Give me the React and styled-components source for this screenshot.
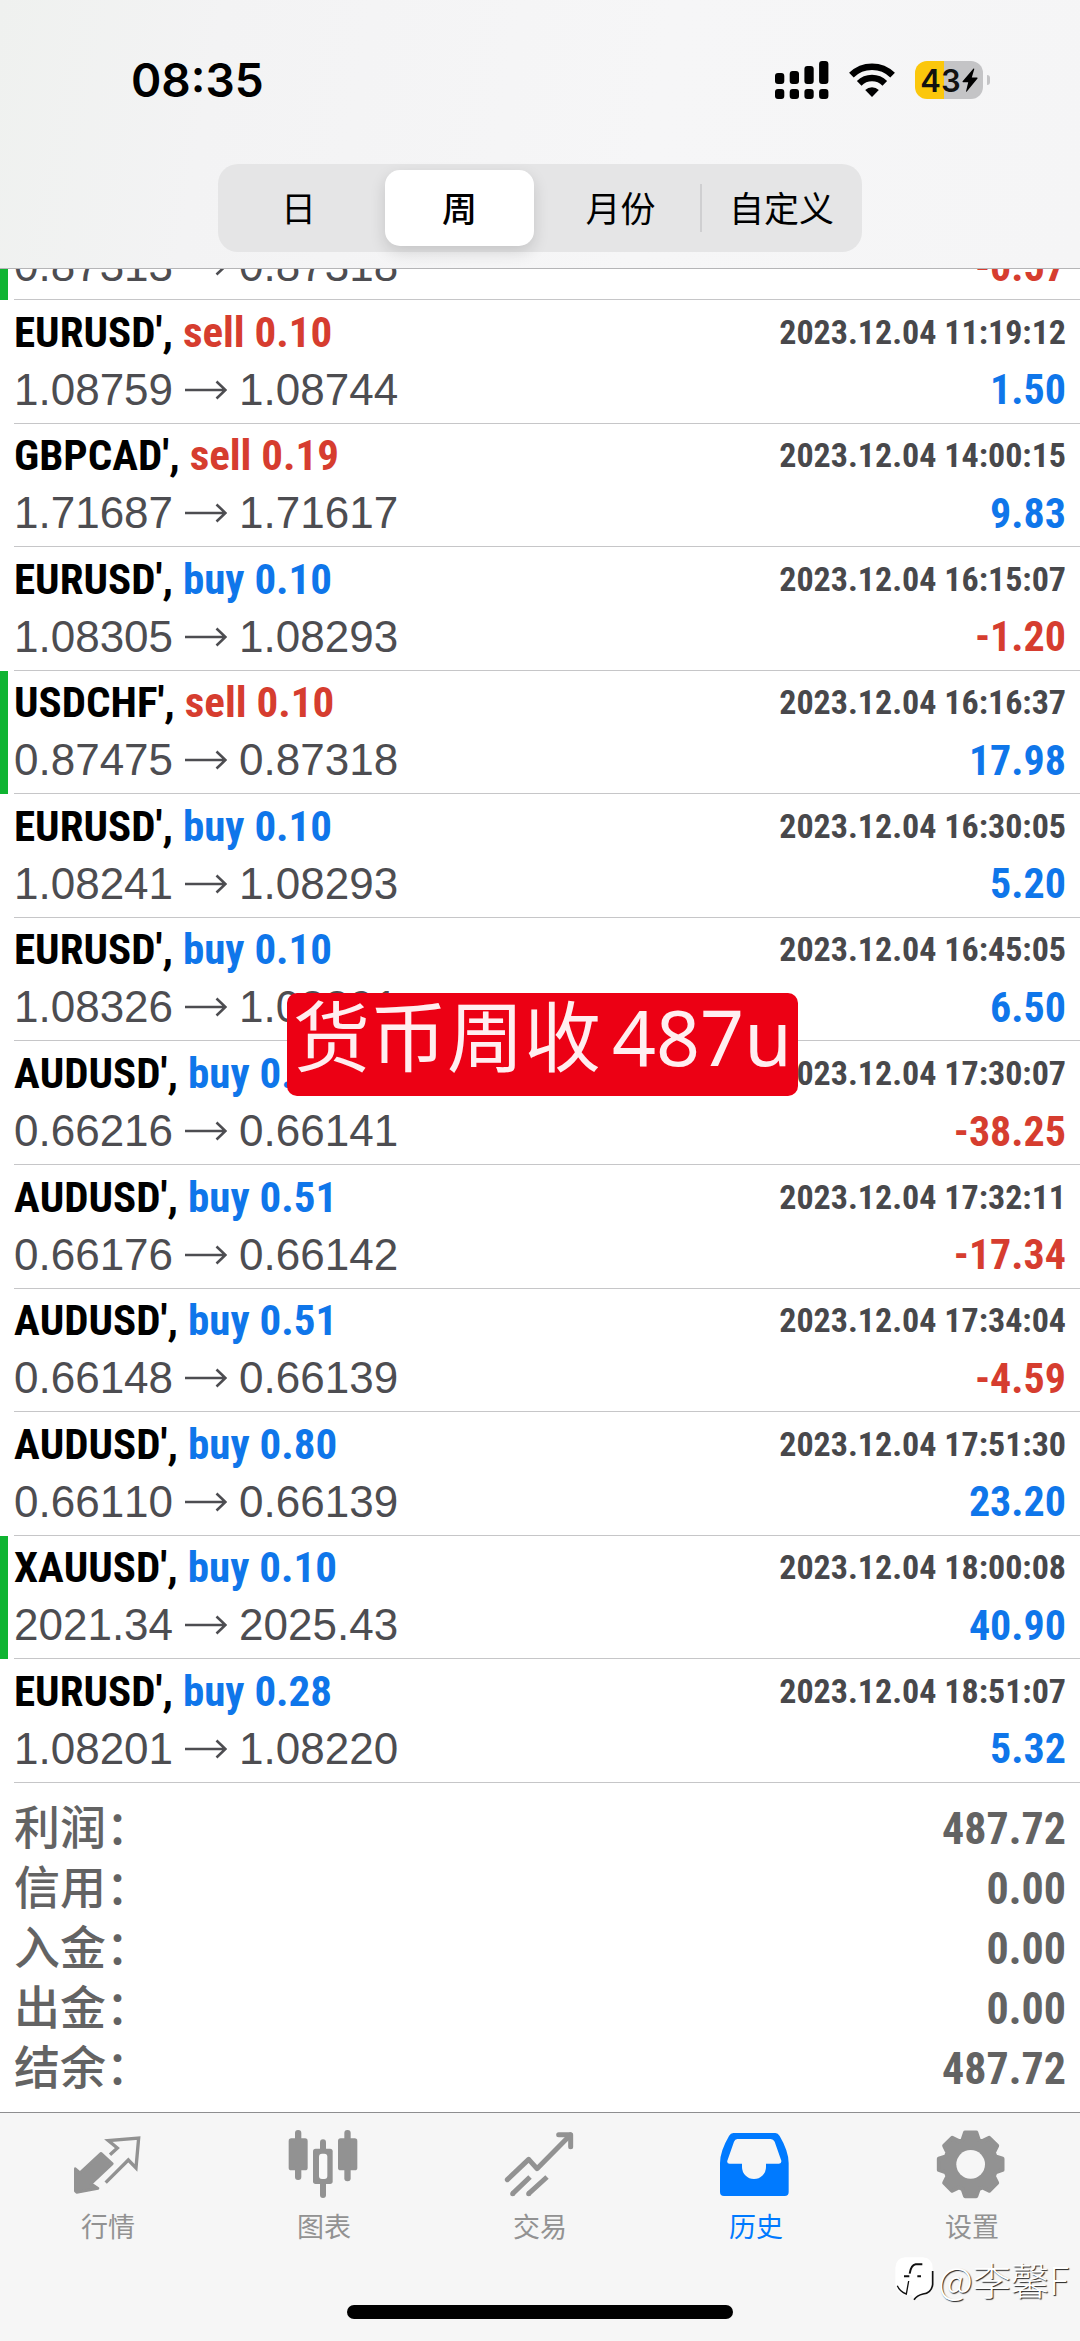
import styled, { createGlobalStyle } from 'styled-components';

const GlobalStyle = createGlobalStyle`
  * {
    box-sizing: border-box;
  }

  body {
    margin: 0;
    background-color: #fff;
    font-family: 'Liberation Sans', 'Noto Sans CJK SC', sans-serif;
    font-kerning: none;
  }

  button {
    border: 0;
    padding: 0;
    background: none;
    font: inherit;
    color: inherit;
  }
`;

const BLUE = '#0f76ea';
const RED = '#d63d2f';
const CONDENSED = "'Roboto Condensed', Roboto, sans-serif";

const Screen = styled.div`
  position: relative;
  display: flex;
  flex-direction: column;
  min-height: 100vh;
  overflow: hidden;
`;

const Header = styled.header`
  border-bottom: 1px solid #b5b5b7;
  background: linear-gradient(100deg, #eff1ef 0%, #f3f3f4 20%, #f6f6f7 60%, #f5f5f6 100%);
`;

const StatusBar = styled.div`
  display: flex;
  align-items: center;
  justify-content: space-between;
  height: 160px;
  padding: 0 90px 0 131px;
`;

const Time = styled.span`
  font-family: Inter, sans-serif;
  font-size: 46px;
  font-weight: 600;
  color: #000;
`;

const StatusIcons = styled.div`
  display: flex;
  align-items: center;
  gap: 20px;
`;

const BatteryBox = styled.div`
  display: flex;
  align-items: center;
  gap: 4px;
`;

const Battery = styled.div`
  display: flex;
  align-items: center;
  justify-content: center;
  gap: 1px;
  width: 68px;
  height: 38px;
  border-radius: 12px;
  background: linear-gradient(90deg, #fbc70c 43%, #c4c4c6 43%);
  font-family: Inter, sans-serif;
  font-size: 31px;
  font-weight: 600;
  color: #111;
`;

const BatteryTip = styled.span`
  width: 3px;
  height: 10px;
  border-radius: 0 4px 4px 0;
  background-color: #c4c4c6;
`;

const Periods = styled.div`
  display: flex;
  width: 60%;
  max-width: 644px;
  height: 88px;
  margin: 4px auto 16px;
  border-radius: 20px;
  background-color: #e5e5e6;
`;

const Period = styled.button`
  flex: 1;
  margin: 6px;
  border-radius: 15px;
  font-family: 'Noto Sans CJK SC', sans-serif;
  font-size: 35px;
  line-height: 74px;
  padding-bottom: 2px;
  white-space: nowrap;
  color: #000;
  font-weight: ${(props) => (props.$active ? 500 : 400)};
  background-color: ${(props) => (props.$active ? '#fff' : 'transparent')};
  box-shadow: ${(props) => (props.$active ? '0 6px 16px rgba(0, 0, 0, 0.14)' : 'none')};
`;

const Divider = styled.span`
  width: 2px;
  height: 48px;
  margin: 20px -1px;
  background-color: #cfcfd1;
`;

const Deals = styled.ul`
  display: flex;
  flex: 1;
  flex-direction: column;
  margin: 0;
  padding: 0;
  list-style: none;
`;

/* a deal scrolled under the header keeps only its bottom edge */
const Deal = styled.li`
  display: flex;
  flex: ${(props) => (props.$scrolled ? '0 0 31px' : '1')};
  overflow: hidden;
  border-left: 8px solid ${(props) => (props.$marked ? '#0fb432' : 'transparent')};
  padding-left: 6px;
`;

const DealBody = styled.div`
  display: flex;
  flex: 1;
  flex-direction: column;
  justify-content: flex-end;
  padding: 0 14px 4px 0;
  border-bottom: 1px solid #c6c6c8;
`;

const Line = styled.div`
  display: flex;
  flex-shrink: 0;
  align-items: center;
  justify-content: space-between;
  height: 58px;
  white-space: nowrap;
`;

const Symbol = styled.span`
  font-family: ${CONDENSED};
  font-size: 43px;
  font-weight: 700;
  color: #000;
`;

const Action = styled.span`
  color: ${(props) => (props.$side === 'buy' ? BLUE : RED)};
`;

const DealTime = styled.time`
  font-family: ${CONDENSED};
  font-size: 34px;
  font-weight: 700;
  color: #48484b;
`;

const Prices = styled.span`
  display: flex;
  align-items: center;
  gap: 12px;
  font-size: 44px;
  color: #4d4d51;
`;

const Profit = styled.span`
  font-family: ${CONDENSED};
  font-size: 42px;
  font-weight: 700;
  color: ${(props) => (props.$loss ? RED : BLUE)};
`;

const Summary = styled.dl`
  margin: 0;
  padding: 16px 14px 13px;
`;

const SummaryRow = styled.div`
  display: flex;
  justify-content: space-between;
  height: 60px;
  color: #636363;
`;

const SummaryLabel = styled.dt`
  font-family: 'Noto Sans CJK SC', sans-serif;
  font-size: 46px;
  font-weight: 500;
  line-height: 50px;
`;

const SummaryValue = styled.dd`
  margin: 0;
  font-family: ${CONDENSED};
  font-size: 44px;
  font-weight: 700;
  line-height: 60px;
`;

const TabBar = styled.nav`
  border-top: 1px solid #8e8e90;
  background-color: #f6f6f6;
`;

const Tabs = styled.div`
  display: flex;
  height: 192px;
  padding-top: 15px;
`;

const Tab = styled.button`
  display: flex;
  flex: 1;
  flex-direction: column;
  align-items: center;
  gap: 6px;
  font-family: 'Noto Sans CJK SC', sans-serif;
  font-size: 27px;
  line-height: 40px;
  color: ${(props) => (props.$active ? '#007aff' : '#929292')};
`;

const HomeIndicator = styled.div`
  width: 386px;
  height: 14px;
  margin: 0 auto 22px;
  border-radius: 7px;
  background-color: #000;
`;

const Banner = styled.div`
  position: absolute;
  top: 993px;
  left: 287px;
  display: flex;
  gap: 11px;
  height: 103px;
  padding: 0 6px;
  border-radius: 10px;
  background-color: #ec0014;
  font-family: 'Noto Sans', 'Noto Sans CJK SC', sans-serif;
  font-size: 77px;
  line-height: 88px;
  white-space: nowrap;
  color: #ffeef0;
`;

const Watermark = styled.div`
  position: absolute;
  right: 11px;
  bottom: 40px;
  display: flex;
  align-items: center;
  gap: 4px;
  font-family: 'Noto Sans CJK SC', sans-serif;
  font-size: 38px;
  font-weight: 300;
  line-height: 40px;
  color: #fff;
  text-shadow: 1px 1px 1px #222;
`;

function SignalIcon() {
  const tops = [12, 10, 5, 0];

  return (
    <svg width="54" height="38" viewBox="0 0 54 38">
      {tops.map((top, i) => (
        <g key={top}>
          <rect x={i * 14.7} y={top} width="9.3" height={23 - top} rx="3" />
          <rect x={i * 14.7} y="28" width="9.3" height="10" rx="3" />
        </g>
      ))}
    </svg>
  );
}

function WifiIcon() {
  return (
    <svg width="46" height="34" viewBox="0 0 46 34" fill="none" stroke="#000" strokeWidth="6.6">
      <path d="M2.4 12.2a29.5 29.5 0 0 1 41.2 0" />
      <path d="M10.2 20.3a18.2 18.2 0 0 1 25.6 0" />
      <path d="M16.2 27a9.8 9.8 0 0 1 13.6 0L23 34z" fill="#000" stroke="none" />
    </svg>
  );
}

function BoltIcon() {
  return (
    <svg width="16" height="24" viewBox="0 0 16 24">
      <path d="M11.5 0.5 0.6 13.2q-0.5 1 0.6 1.1h5L4 23.4q0.2 0.6 0.8 0.2L15.5 10.4q0.4-0.9-0.6-1H9.8L12.3 1q0-0.7-0.8-0.5z" />
    </svg>
  );
}

function ArrowIcon() {
  return (
    <svg width="42" height="20" viewBox="0 0 42 20" fill="none" stroke="currentColor" strokeWidth="2.6">
      <path d="M0 10h40M31.5 1.5 40.5 10l-9 8.5" />
    </svg>
  );
}

function QuotesIcon() {
  return (
    <svg width="72" height="72" viewBox="0 0 216 216">
      <path
        d="M114 80 136 60 109 38 200 30 192 120 169 96 101 164"
        fill="none"
        stroke="currentColor"
        strokeWidth="10"
      />
      <path
        d="M87 76 121 107 57 167 78 181 14 193 10 189V122L24 134z"
        fill="currentColor"
        stroke="currentColor"
        strokeWidth="8"
        strokeLinejoin="round"
      />
    </svg>
  );
}

function ChartIcon() {
  return (
    <svg width="72" height="72" viewBox="0 0 216 216" fill="currentColor">
      <rect x="2" y="31" width="57" height="96" rx="8" />
      <rect x="21" y="6" width="19" height="150" rx="9" />
      <rect x="150" y="31" width="58" height="96" rx="8" />
      <rect x="169" y="6" width="19" height="154" rx="9" />
      <rect x="96" y="34" width="18" height="176" rx="9" />
      <rect x="75" y="62" width="59" height="106" rx="8" />
      <rect x="93" y="77" width="25" height="76" rx="9" fill="#f9f9f9" />
    </svg>
  );
}

function TradeIcon() {
  return (
    <svg
      width="72"
      height="72"
      viewBox="0 0 216 216"
      fill="none"
      stroke="currentColor"
      strokeWidth="15"
      strokeLinejoin="round"
    >
      <path d="M10 155 74 94 99 122 199 21" strokeLinecap="round" />
      <path d="M164 20h36v36" strokeLinecap="round" />
      <path d="M26 197 78 147M74 197 129 147" />
      <circle cx="26" cy="197" r="7.5" fill="currentColor" stroke="none" />
      <circle cx="74" cy="197" r="7.5" fill="currentColor" stroke="none" />
    </svg>
  );
}

function HistoryIcon() {
  return (
    <svg width="72" height="72" viewBox="0 0 216 216" fill="currentColor" fillRule="evenodd">
      <path
        d="M40 15H166Q174 15 179 24Q206 70 206 105V192Q206 204 194 204H12Q0 204 0 192V105Q0 70 27 24Q32 15 40 15Z
          M52 33H152Q160 33 164 41L184 98Q185 107 177 107H138V117a36 36 0 0 1-72 0V107H29Q20 107 22 98L42 41Q45 33 52 33Z"
      />
    </svg>
  );
}

function SettingsIcon() {
  const corners = [[78, -18], [97, -10], [97, 10], [78, 18]];
  const points = [];

  for (let tooth = 0; tooth < 8; tooth += 1) {
    corners.forEach(([radius, offset]) => {
      const angle = ((tooth * 45 + offset) * Math.PI) / 180;
      points.push(`${104 + radius * Math.sin(angle)},${109 - radius * Math.cos(angle)}`);
    });
  }

  return (
    <svg width="72" height="72" viewBox="0 0 216 216">
      <polygon
        points={points.join(' ')}
        fill="currentColor"
        stroke="currentColor"
        strokeWidth="12"
        strokeLinejoin="round"
      />
      <circle cx="104" cy="109" r="43" fill="#f6f6f6" />
    </svg>
  );
}

function WatermarkLogo() {
  return (
    <svg width="39" height="44" viewBox="0 0 117 132" fill="none" stroke="#111" strokeWidth="4">
      <path
        d="M30 1H84Q113 3 113 34V82Q110 108 84 112L56 130 50 114H34Q1 110 1 82V32Q3 3 30 1Z"
        fill="#fff"
        stroke="none"
      />
      <path d="M44 50Q48 24 62 22H82M27 58H43M67 58H78" strokeWidth="6" />
      <path d="M41 72 34 111Q14 104 7 86" />
      <path d="M113 42V82Q110 108 84 111 66 115 57 128" strokeWidth="5" />
    </svg>
  );
}

const periods = ['日', '周', '月份', '自定义'];

const deals = [
  { open: '0.87313', close: '0.87318', time: 'scrolled', profit: '-0.57', marked: true },
  { symbol: "EURUSD'", side: 'sell', volume: '0.10', open: '1.08759', close: '1.08744', time: '2023.12.04 11:19:12', profit: '1.50' },
  { symbol: "GBPCAD'", side: 'sell', volume: '0.19', open: '1.71687', close: '1.71617', time: '2023.12.04 14:00:15', profit: '9.83' },
  { symbol: "EURUSD'", side: 'buy', volume: '0.10', open: '1.08305', close: '1.08293', time: '2023.12.04 16:15:07', profit: '-1.20' },
  { symbol: "USDCHF'", side: 'sell', volume: '0.10', open: '0.87475', close: '0.87318', time: '2023.12.04 16:16:37', profit: '17.98', marked: true },
  { symbol: "EURUSD'", side: 'buy', volume: '0.10', open: '1.08241', close: '1.08293', time: '2023.12.04 16:30:05', profit: '5.20' },
  { symbol: "EURUSD'", side: 'buy', volume: '0.10', open: '1.08326', close: '1.08391', time: '2023.12.04 16:45:05', profit: '6.50' },
  { symbol: "AUDUSD'", side: 'buy', volume: '0.51', open: '0.66216', close: '0.66141', time: '2023.12.04 17:30:07', profit: '-38.25' },
  { symbol: "AUDUSD'", side: 'buy', volume: '0.51', open: '0.66176', close: '0.66142', time: '2023.12.04 17:32:11', profit: '-17.34' },
  { symbol: "AUDUSD'", side: 'buy', volume: '0.51', open: '0.66148', close: '0.66139', time: '2023.12.04 17:34:04', profit: '-4.59' },
  { symbol: "AUDUSD'", side: 'buy', volume: '0.80', open: '0.66110', close: '0.66139', time: '2023.12.04 17:51:30', profit: '23.20' },
  { symbol: "XAUUSD'", side: 'buy', volume: '0.10', open: '2021.34', close: '2025.43', time: '2023.12.04 18:00:08', profit: '40.90', marked: true },
  { symbol: "EURUSD'", side: 'buy', volume: '0.28', open: '1.08201', close: '1.08220', time: '2023.12.04 18:51:07', profit: '5.32' }
];

const totals = [
  ['利润：', '487.72'],
  ['信用：', '0.00'],
  ['入金：', '0.00'],
  ['出金：', '0.00'],
  ['结余：', '487.72']
];

const tabs = [
  { label: '行情', Icon: QuotesIcon },
  { label: '图表', Icon: ChartIcon },
  { label: '交易', Icon: TradeIcon },
  { label: '历史', Icon: HistoryIcon },
  { label: '设置', Icon: SettingsIcon }
];

function App() {
  return (
    <Screen>
      <GlobalStyle />
      <Header>
        <StatusBar>
          <Time>08:35</Time>
          <StatusIcons>
            <SignalIcon />
            <WifiIcon />
            <BatteryBox>
              <Battery>
                43
                <BoltIcon />
              </Battery>
              <BatteryTip />
            </BatteryBox>
          </StatusIcons>
        </StatusBar>
        <Periods>
          {periods.map((name) => [
            name === '自定义' && <Divider key="divider" />,
            <Period key={name} type="button" $active={name === '周'}>
              {name}
            </Period>
          ])}
        </Periods>
      </Header>

      <Deals>
        {deals.map((deal) => (
          <Deal key={deal.time} $marked={deal.marked} $scrolled={!deal.symbol}>
            <DealBody>
              {deal.symbol && (
                <Line>
                  <Symbol>
                    {deal.symbol},{' '}
                    <Action $side={deal.side}>
                      {deal.side} {deal.volume}
                    </Action>
                  </Symbol>
                  <DealTime>{deal.time}</DealTime>
                </Line>
              )}
              <Line>
                <Prices>
                  {deal.open}
                  <ArrowIcon />
                  {deal.close}
                </Prices>
                <Profit $loss={deal.profit.startsWith('-')}>{deal.profit}</Profit>
              </Line>
            </DealBody>
          </Deal>
        ))}
      </Deals>

      <Summary>
        {totals.map(([label, value]) => (
          <SummaryRow key={label}>
            <SummaryLabel>{label}</SummaryLabel>
            <SummaryValue>{value}</SummaryValue>
          </SummaryRow>
        ))}
      </Summary>

      <TabBar>
        <Tabs>
          {tabs.map(({ label, Icon }) => (
            <Tab key={label} type="button" $active={label === '历史'}>
              <Icon />
              {label}
            </Tab>
          ))}
        </Tabs>
        <HomeIndicator />
      </TabBar>

      <Banner>
        <span>货币周收</span>
        <span>487u</span>
      </Banner>

      <Watermark>
        <WatermarkLogo />
        @李馨F
      </Watermark>
    </Screen>
  );
}

export default App;
